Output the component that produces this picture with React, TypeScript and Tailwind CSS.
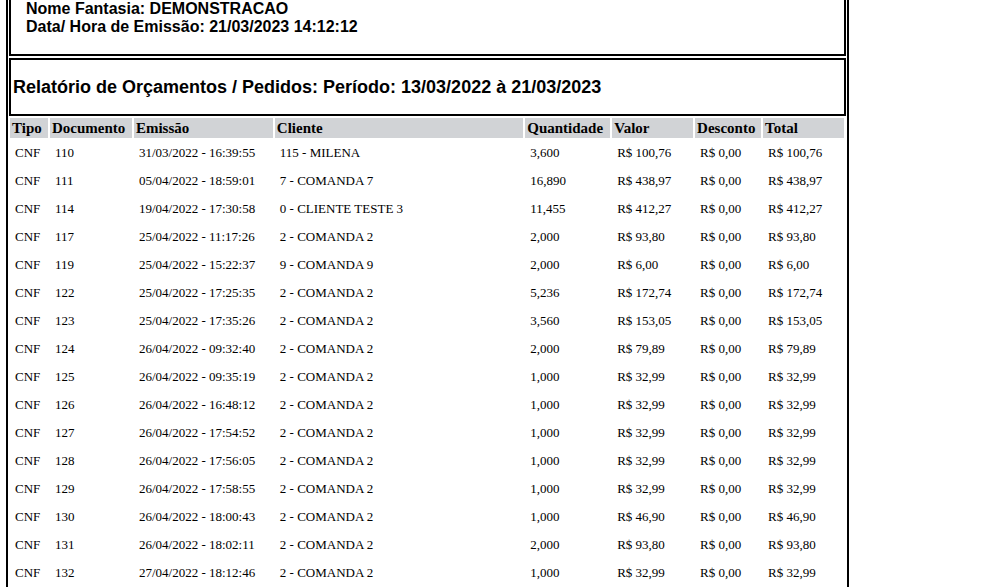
const rows: [string, string, string, string, string, string, string, string][] = [
  ["CNF", "110", "31/03/2022 - 16:39:55", "115 - MILENA", "3,600", "R$ 100,76", "R$ 0,00", "R$ 100,76"],
  ["CNF", "111", "05/04/2022 - 18:59:01", "7 - COMANDA 7", "16,890", "R$ 438,97", "R$ 0,00", "R$ 438,97"],
  ["CNF", "114", "19/04/2022 - 17:30:58", "0 - CLIENTE TESTE 3", "11,455", "R$ 412,27", "R$ 0,00", "R$ 412,27"],
  ["CNF", "117", "25/04/2022 - 11:17:26", "2 - COMANDA 2", "2,000", "R$ 93,80", "R$ 0,00", "R$ 93,80"],
  ["CNF", "119", "25/04/2022 - 15:22:37", "9 - COMANDA 9", "2,000", "R$ 6,00", "R$ 0,00", "R$ 6,00"],
  ["CNF", "122", "25/04/2022 - 17:25:35", "2 - COMANDA 2", "5,236", "R$ 172,74", "R$ 0,00", "R$ 172,74"],
  ["CNF", "123", "25/04/2022 - 17:35:26", "2 - COMANDA 2", "3,560", "R$ 153,05", "R$ 0,00", "R$ 153,05"],
  ["CNF", "124", "26/04/2022 - 09:32:40", "2 - COMANDA 2", "2,000", "R$ 79,89", "R$ 0,00", "R$ 79,89"],
  ["CNF", "125", "26/04/2022 - 09:35:19", "2 - COMANDA 2", "1,000", "R$ 32,99", "R$ 0,00", "R$ 32,99"],
  ["CNF", "126", "26/04/2022 - 16:48:12", "2 - COMANDA 2", "1,000", "R$ 32,99", "R$ 0,00", "R$ 32,99"],
  ["CNF", "127", "26/04/2022 - 17:54:52", "2 - COMANDA 2", "1,000", "R$ 32,99", "R$ 0,00", "R$ 32,99"],
  ["CNF", "128", "26/04/2022 - 17:56:05", "2 - COMANDA 2", "1,000", "R$ 32,99", "R$ 0,00", "R$ 32,99"],
  ["CNF", "129", "26/04/2022 - 17:58:55", "2 - COMANDA 2", "1,000", "R$ 32,99", "R$ 0,00", "R$ 32,99"],
  ["CNF", "130", "26/04/2022 - 18:00:43", "2 - COMANDA 2", "1,000", "R$ 46,90", "R$ 0,00", "R$ 46,90"],
  ["CNF", "131", "26/04/2022 - 18:02:11", "2 - COMANDA 2", "2,000", "R$ 93,80", "R$ 0,00", "R$ 93,80"],
  ["CNF", "132", "27/04/2022 - 18:12:46", "2 - COMANDA 2", "1,000", "R$ 32,99", "R$ 0,00", "R$ 32,99"],
];

const headers = ["Tipo", "Documento", "Emissão", "Cliente", "Quantidade", "Valor", "Desconto", "Total"];
const widths = ["w-[38px]", "w-[82px]", "w-[139px]", "w-[249px]", "w-[85px]", "w-[81px]", "w-[66px]", "w-[81px]"];

export default function App() {
  return (
    <div className="h-[587px] overflow-hidden bg-white text-black">
      <div className="-mt-[22px] ml-[6px] w-[843px] border-x-2 border-black px-px pb-10">
        {/* cabeçalho da empresa */}
        <div className="border-2 border-black pt-[20px] pb-[18px] pl-[15px] font-['Liberation_Sans',Arial,sans-serif] text-[16px] leading-[18px] font-bold">
          <div>Nome Fantasia: DEMONSTRACAO</div>
          <div>Data/ Hora de Emissão: 21/03/2023 14:12:12</div>
        </div>

        <div className="mt-[2px] flex h-[58px] items-center border-2 border-black pl-[2px] font-['Liberation_Sans',Arial,sans-serif] text-[18px] font-bold">
          Relatório de Orçamentos / Pedidos: Período: 13/03/2022 à 21/03/2023
        </div>

        <table className="table-fixed border-separate border-spacing-[2px] -ml-px font-['Liberation_Serif','Times_New_Roman',serif]">
          <thead>
            <tr>
              {headers.map((h, i) => (
                <th key={h} className={`${widths[i]} h-[20px] bg-[#d1d3d6] p-0 pl-[2px] text-left text-[15px] leading-[20px] font-bold`}>
                  {h}
                </th>
              ))}
            </tr>
          </thead>
          <tbody>
            {rows.map((r) => (
              <tr key={r[1]}>
                {r.map((c, i) => (
                  <td key={i} className="h-[26px] p-0 pl-[5px] text-[13px] leading-[26px] whitespace-nowrap">
                    {c}
                  </td>
                ))}
              </tr>
            ))}
          </tbody>
        </table>
      </div>
    </div>
  );
}
